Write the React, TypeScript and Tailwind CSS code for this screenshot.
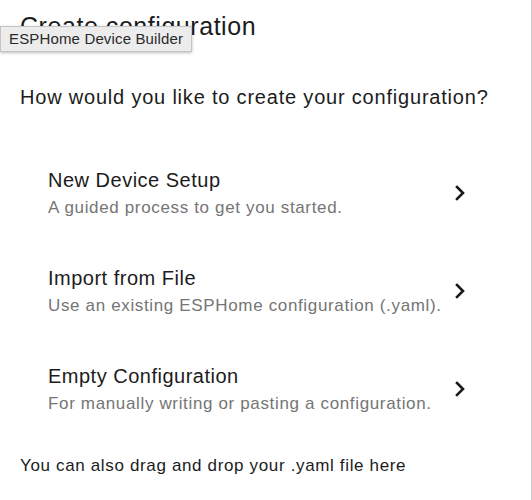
const items = [
  { title: 'New Device Setup', subtitle: 'A guided process to get you started.' },
  { title: 'Import from File', subtitle: 'Use an existing ESPHome configuration (.yaml).' },
  { title: 'Empty Configuration', subtitle: 'For manually writing or pasting a configuration.' },
]

const Chevron = () => (
  <svg width="24" height="24" viewBox="0 0 24 24" className="text-[#1a1a1a]">
    <polyline points="9,6 15,12 9,18" fill="none" stroke="currentColor" strokeWidth="2.6" strokeLinecap="square" />
  </svg>
)

export default function App() {
  return (
    <div
      className="relative w-[532px] h-[500px] bg-white border-r border-[#cfcfcf] overflow-hidden text-[#1c1c1c]"
      style={{ fontFamily: '"Liberation Sans", Arial, sans-serif' }}
    >
      <h2 className="mt-[10px] px-5 text-[25px] leading-8 tracking-[0.55px]">Create configuration</h2>

      {/* tooltip from the tab */}
      <div className="absolute left-0 top-[26px] h-[26px] pl-2 pr-[8px] flex items-center bg-[#ececec] border border-[#c4c4c4] shadow-[0_1px_3px_rgba(0,0,0,0.25)] text-[15px] tracking-[0.15px] text-[#2a2a2a]">
        ESPHome Device Builder
      </div>

      <p className="mt-[43px] px-5 text-[20px] leading-6 tracking-[0.8px]">
        How would you like to create your configuration?
      </p>

      <div className="mt-[35px] flex flex-col">
        {items.map((item) => (
          <div key={item.title} className="h-[98px] pl-12 pr-[59px] flex items-center justify-between">
            <div className="flex flex-col gap-[6px]">
              <span className="text-[20px] leading-6 tracking-[0.5px]">{item.title}</span>
              <span className="text-[17px] leading-5 tracking-[0.65px] text-[#757575]">{item.subtitle}</span>
            </div>
            <Chevron />
          </div>
        ))}
      </div>

      <p className="mt-[16px] px-5 text-[17px] leading-6 tracking-[0.65px]">
        You can also drag and drop your .yaml file here
      </p>
    </div>
  )
}
